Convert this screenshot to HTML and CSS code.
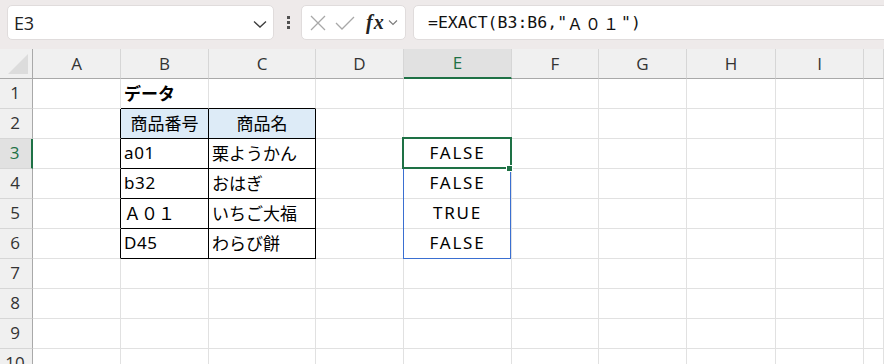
FILE: index.html
```html
<!DOCTYPE html>
<html lang="ja">
<head>
<meta charset="utf-8">
<link rel="stylesheet" href="styles.css">
</head>
<body>
<div class="toolbar">
  <div class="namebox">
    <span class="name">E3</span>
    <svg class="chev" width="14" height="8" viewBox="0 0 14 8"><path d="M1 1.5 L7 7 L13 1.5" fill="none" stroke="#3c3c3c" stroke-width="1.3"/></svg>
  </div>
  <div class="dots"><i></i><i></i><i></i></div>
  <div class="fbtns">
    <svg width="18" height="18" viewBox="0 0 18 18"><path d="M2 2 L16 16 M16 2 L2 16" stroke="#a8a8a8" stroke-width="1.3" fill="none"/></svg>
    <svg width="20" height="16" viewBox="0 0 20 16"><path d="M1 8 L7 14 L19 2" stroke="#a8a8a8" stroke-width="1.3" fill="none"/></svg>
    <span class="fx">fx</span>
    <svg width="10" height="7" viewBox="0 0 10 7"><path d="M1 1.5 L5 5.5 L9 1.5" stroke="#7a7a7a" stroke-width="1.1" fill="none"/></svg>
  </div>
  <div class="formula">=EXACT(B3:B6,"<span class="fw">Ａ０１</span>")</div>
</div>

<div class="sheet">
  <div class="grid">
    <div class="corner"><span class="tri"></span></div>
    <div class="ch">A</div><div class="ch">B</div><div class="ch">C</div><div class="ch">D</div><div class="ch sel">E</div><div class="ch">F</div><div class="ch">G</div><div class="ch">H</div><div class="ch">I</div><div class="ch"></div>

    <div class="rh">1</div>
    <div class="c"></div><div class="c bold tb">データ</div><div class="c tb"></div><div class="c"></div><div class="c"></div><div class="c"></div><div class="c"></div><div class="c"></div><div class="c"></div><div class="c"></div>

    <div class="rh">2</div>
    <div class="c lb"></div><div class="c hd tbl">商品番号</div><div class="c hd tbl">商品名</div><div class="c"></div><div class="c"></div><div class="c"></div><div class="c"></div><div class="c"></div><div class="c"></div><div class="c"></div>

    <div class="rh rsel">3</div>
    <div class="c lb"></div><div class="c tbl lat">a01</div><div class="c tbl">栗ようかん</div><div class="c"></div><div class="c ctr">FALSE</div><div class="c"></div><div class="c"></div><div class="c"></div><div class="c"></div><div class="c"></div>

    <div class="rh">4</div>
    <div class="c lb"></div><div class="c tbl lat">b32</div><div class="c tbl">おはぎ</div><div class="c"></div><div class="c ctr">FALSE</div><div class="c"></div><div class="c"></div><div class="c"></div><div class="c"></div><div class="c"></div>

    <div class="rh">5</div>
    <div class="c lb"></div><div class="c tbl">Ａ０１</div><div class="c tbl">いちご大福</div><div class="c"></div><div class="c ctr">TRUE</div><div class="c"></div><div class="c"></div><div class="c"></div><div class="c"></div><div class="c"></div>

    <div class="rh">6</div>
    <div class="c lb"></div><div class="c tbl lat">D45</div><div class="c tbl">わらび餅</div><div class="c"></div><div class="c ctr">FALSE</div><div class="c"></div><div class="c"></div><div class="c"></div><div class="c"></div><div class="c"></div>

    <div class="rh">7</div>
    <div class="c"></div><div class="c"></div><div class="c"></div><div class="c"></div><div class="c"></div><div class="c"></div><div class="c"></div><div class="c"></div><div class="c"></div><div class="c"></div>

    <div class="rh">8</div>
    <div class="c"></div><div class="c"></div><div class="c"></div><div class="c"></div><div class="c"></div><div class="c"></div><div class="c"></div><div class="c"></div><div class="c"></div><div class="c"></div>

    <div class="rh">9</div>
    <div class="c"></div><div class="c"></div><div class="c"></div><div class="c"></div><div class="c"></div><div class="c"></div><div class="c"></div><div class="c"></div><div class="c"></div><div class="c"></div>

    <div class="rh">10</div>
    <div class="c"></div><div class="c"></div><div class="c"></div><div class="c"></div><div class="c"></div><div class="c"></div><div class="c"></div><div class="c"></div><div class="c"></div><div class="c"></div>
  </div>
  <div class="range"></div>
  <div class="active"></div>
  <div class="handle"></div>
</div>
</body>
</html>
```
FILE: styles.css
```css
* { box-sizing: border-box; }
html, body { margin: 0; padding: 0; }
body {
  width: 884px;
  height: 364px;
  overflow: hidden;
  background: #ffffff;
  font-family: "Noto Sans", "Noto Sans CJK JP", sans-serif;
}
.toolbar {
  height: 49px;
  background: #eeeaea;
  display: flex;
  align-items: flex-start;
  padding: 5px 0 0 7px;
}
.namebox {
  width: 267px;
  height: 35px;
  background: #fff;
  border: 1px solid #e0dcdc;
  border-radius: 5px;
  display: flex;
  align-items: center;
  justify-content: space-between;
  padding: 0 6px 0 6px;
}
.name {
  font-family: "Open Sans", "Noto Sans", sans-serif;
  font-size: 18px;
  color: #222;
  letter-spacing: -0.3px;
}
.chev { margin-top: 2px; }
.dots {
  width: 27px;
  height: 35px;
  display: flex;
  flex-direction: column;
  align-items: center;
  justify-content: center;
  gap: 2px;
  padding-left: 1px;
}
.dots i {
  display: block;
  width: 3px;
  height: 3px;
  background: #505050;
}
.fbtns {
  width: 105px;
  height: 35px;
  background: #fff;
  border: 1px solid #e0dcdc;
  border-radius: 5px;
  display: flex;
  align-items: center;
  padding-left: 7px;
  gap: 8px;
}
.fbtns .fx {
  font-family: "Liberation Serif", serif;
  font-style: italic;
  font-weight: bold;
  font-size: 20px;
  color: #222;
  margin-left: 3px;
  margin-right: -5px;
  letter-spacing: 1px;
}
.formula {
  flex: 1;
  margin-left: 7px;
  margin-right: -10px;
  height: 35px;
  background: #fff;
  border: 1px solid #e0dcdc;
  border-radius: 5px;
  display: flex;
  align-items: center;
  padding-left: 14px;
  font-family: "DejaVu Sans Mono", "Noto Sans CJK JP", monospace;
  font-size: 16.5px;
  color: #111;
  white-space: pre;
}
.formula .fw {
  font-family: "Noto Sans CJK JP", sans-serif;
  font-size: 16px;
  letter-spacing: 2px;
}

.sheet { position: relative; }
.grid {
  display: grid;
  grid-template-columns: 33px 88px 88px 107px 88px 108px 87px 88px 89px 88px 1fr;
  grid-template-rows: 30px repeat(10, 30px);
}
.corner {
  background: #f0f0f0;
  border-right: 1px solid #a9a9a9;
  border-bottom: 1px solid #a9a9a9;
  position: relative;
}
.tri {
  position: absolute;
  right: 4px;
  bottom: 4px;
  width: 0;
  height: 0;
  border-left: 20px solid transparent;
  border-bottom: 20px solid #dcdcdc;
}
.ch {
  background: #f0f0f0;
  border-right: 1px solid #d6d6d6;
  border-bottom: 1px solid #a9a9a9;
  display: flex;
  align-items: center;
  justify-content: center;
  font-family: "Open Sans", "Noto Sans", sans-serif;
  font-size: 17px;
  color: #333;
  padding-bottom: 1px;
}
.ch.sel {
  background: #e1e1e1;
  color: #1e7145;
  border-bottom: 2px solid #1e7145;
}
.rh {
  background: #f0f0f0;
  border-right: 1px solid #a9a9a9;
  border-bottom: 1px solid #d6d6d6;
  display: flex;
  align-items: center;
  justify-content: center;
  font-family: "Open Sans", "Noto Sans", sans-serif;
  font-size: 17px;
  color: #333;
  padding-right: 2px;
  padding-bottom: 2px;
}
.rh.rsel {
  background: #e1e1e1;
  color: #1e7145;
  border-right: 2px solid #1e7145;
}
.c {
  border-right: 1px solid #e1e1e1;
  border-bottom: 1px solid #e1e1e1;
  display: flex;
  align-items: center;
  padding-left: 3px;
  padding-bottom: 3px;
  font-family: "Noto Sans CJK JP", sans-serif;
  font-size: 17px;
  color: #000;
  white-space: nowrap;
  overflow: hidden;
}
.c.lat {
  font-family: "Noto Sans", "Noto Sans CJK JP", sans-serif;
  font-size: 17px;
  letter-spacing: 0.6px;
  padding-bottom: 2px;
}
.c.bold { font-weight: bold; }
.c.tb { border-bottom-color: #000; }
.c.lb { border-right-color: #000; }
.c.tbl { border-right-color: #000; border-bottom-color: #000; }
.c.hd { background: #ddebf7; justify-content: center; padding-left: 0; }
.c.ctr {
  justify-content: center;
  padding-left: 0;
  padding-bottom: 2px;
  font-family: "Noto Sans", "Noto Sans CJK JP", sans-serif;
  font-size: 17px;
  letter-spacing: 1.8px;
}

.active {
  position: absolute;
  left: 402px;
  top: 88px;
  width: 110px;
  height: 32px;
  border: 2px solid #1e7145;
}
.range {
  position: absolute;
  left: 403px;
  top: 119px;
  width: 108px;
  height: 91px;
  border: 1px solid #3a6fd1;
}
.handle {
  position: absolute;
  left: 506px;
  top: 116px;
  width: 7px;
  height: 7px;
  background: #1e7145;
  border: 1px solid #fff;
}
```
